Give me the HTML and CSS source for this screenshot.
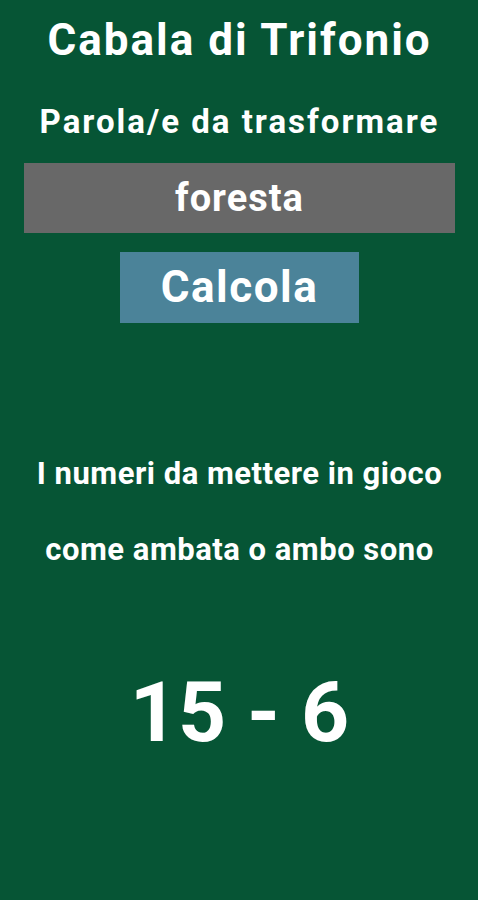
FILE: index.html
```html
<!DOCTYPE html>
<html lang="it">
<head>
<meta charset="UTF-8">
<meta name="viewport" content="width=device-width, initial-scale=1.0">
<title>Cabala di Trifonio</title>
<link rel="stylesheet" href="styles.css">
</head>
<body>

<div class="cabala-container">
    <!-- Titolo -->
    <h1 class="cabala-title">Cabala di Trifonio</h1>
    <div class="cabala-label">Parola/e da trasformare</div>

    <!-- Campo parola -->
    <div class="word-box">foresta</div>

    <!-- Pulsante -->
    <div class="calc-button">Calcola</div>

    <!-- Risultato -->
    <div class="result-text">
        <p>I numeri da mettere in gioco</p>
        <p>come ambata o ambo sono</p>
    </div>
    <div class="result-numbers">15 - 6</div>
</div>

</body>
</html>
```

FILE: styles.css
```css
html, body {
    margin: 0;
    height: 100%;
}

body {
    background-color: #065535;
    font-family: Roboto, "Liberation Sans", sans-serif;
    color: #fff;
}

.cabala-container {
    display: flex;
    flex-direction: column;
    align-items: center;
    padding: 0 23px 0 24px;
}

.cabala-title {
    margin: 14px 0 0;
    font-size: 44px;
    font-weight: bold;
    line-height: 52px;
    letter-spacing: 2px;
}

.cabala-label {
    margin-top: 36px;
    font-size: 33px;
    font-weight: bold;
    line-height: 40px;
    letter-spacing: 2px;
}

.word-box {
    align-self: stretch;
    margin-top: 21px;
    height: 70px;
    background-color: #686868;
    font-size: 38px;
    font-weight: bold;
    line-height: 70px;
    letter-spacing: 1px;
    text-align: center;
}

.calc-button {
    margin-top: 19px;
    width: 239px;
    height: 71px;
    background-color: #4b8399;
    font-size: 44px;
    font-weight: bold;
    line-height: 71px;
    letter-spacing: 1.5px;
    text-align: center;
}

.result-text {
    margin-top: 113px;
    text-align: center;
}

.result-text p {
    margin: 0;
    font-size: 31px;
    font-weight: bold;
    line-height: 76px;
    letter-spacing: 0.5px;
}

.result-numbers {
    margin-top: 75px;
    font-size: 84px;
    font-weight: bold;
    line-height: 100px;
}
```
